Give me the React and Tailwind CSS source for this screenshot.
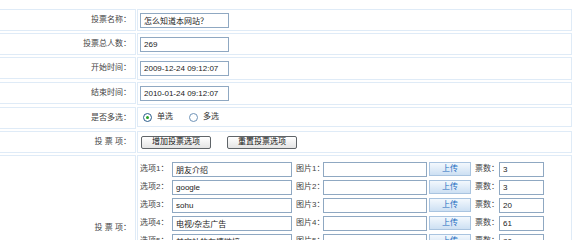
import React from 'react';

// legacy vote edit form

const cell = 'border border-[#dfebf7] bg-white';
const field = 'shrink-0 h-[15px] border border-[#8fa8c2] bg-white px-[3px] text-[8px] text-[#222] outline-none';

const Label = ({ children, tall }) => (
  <div className={`${cell} flex items-center justify-end pr-[4px] text-[#444] whitespace-nowrap ${tall ? '' : 'h-[22px]'}`}>
    {children}
  </div>
);

const Radio = ({ checked }) => (
  <span className={`w-[9px] h-[9px] rounded-full border bg-white flex items-center justify-center ${checked ? 'border-[#2b5d8c]' : 'border-[#6f93b8]'}`}>
    {checked && <span className="w-[3px] h-[3px] rounded-full bg-[#26a326]" />}
  </span>
);

const options = [
  { name: '朋友介绍', votes: '3' },
  { name: 'google', votes: '3' },
  { name: 'sohu', votes: '20' },
  { name: '电视/杂志广告', votes: '61' },
  { name: '其它站的友情链接', votes: '80' },
  { name: '搜索引擎', votes: '42' },
  { name: '其他', votes: '12' },
];

export default function App() {
  return (
    <div className="w-[582px] h-[240px] overflow-hidden bg-white pt-[9px] text-[8px] font-['Liberation_Sans','Noto_Sans_CJK_SC',sans-serif]">
      <div className="ml-[-3px] grid grid-cols-[139px_435px] gap-x-px gap-y-[2px]">
        <Label>投票名称：</Label>
        <div className={`${cell} h-[22px] flex items-center pl-[2px]`}>
          <input readOnly defaultValue="怎么知道本网站？" className={`${field} w-[89px]`} />
        </div>

        <Label>投票总人数：</Label>
        <div className={`${cell} h-[22px] flex items-center pl-[2px]`}>
          <input readOnly defaultValue="269" className={`${field} w-[89px]`} />
        </div>

        <Label>开始时间：</Label>
        <div className={`${cell} h-[23px] flex items-center pl-[2px]`}>
          <input readOnly defaultValue="2009-12-24 09:12:07" className={`${field} w-[89px]`} />
        </div>

        <Label>结束时间：</Label>
        <div className={`${cell} h-[23px] flex items-center pl-[2px]`}>
          <input readOnly defaultValue="2010-01-24 09:12:07" className={`${field} w-[89px]`} />
        </div>

        <Label>是否多选：</Label>
        <div className={`${cell} h-[20px] flex items-center pl-[5px] text-[#333]`}>
          <Radio checked />
          <span className="ml-[5px]">单选</span>
          <span className="ml-[16px]"><Radio /></span>
          <span className="ml-[5px]">多选</span>
        </div>

        <Label>投 票 项：</Label>
        <div className={`${cell} h-[22px] flex items-center pl-[3px] gap-[16px]`}>
          <button className="w-[70px] h-[13px] rounded-[2px] border border-[#5f6468] bg-gradient-to-b from-white to-[#e4e4e4] text-[8px] leading-none text-[#111]">
            增加投票选项
          </button>
          <button className="w-[70px] h-[13px] rounded-[2px] border border-[#5f6468] bg-gradient-to-b from-white to-[#e4e4e4] text-[8px] leading-none text-[#111]">
            重置投票选项
          </button>
        </div>

        <Label tall>投 票 项：</Label>
        <div className={`${cell} flex flex-col pl-[2px] pt-[4px] pb-[14px] text-[#444] whitespace-nowrap`}>
          {options.map((o, i) => (
            <div key={i} className="h-[18px] flex items-center">
              <span className="shrink-0 w-[32px]">选项{i + 1}：</span>
              <input readOnly defaultValue={o.name} className={`${field} w-[120px]`} />
              <span className="shrink-0 ml-[4px] w-[27px]">图片{i + 1}：</span>
              <input readOnly defaultValue="" className={`${field} w-[104px]`} />
              <button className="shrink-0 ml-[2px] w-[42px] h-[14px] border border-[#a9c4e0] bg-gradient-to-b from-[#f3f8fd] to-[#cde0f3] text-[8px] leading-none text-[#1c6cc0]">
                上传
              </button>
              <span className="shrink-0 ml-[4px] w-[24px]">票数：</span>
              <input readOnly defaultValue={o.votes} className={`${field} w-[45px]`} />
            </div>
          ))}
        </div>
      </div>
    </div>
  );
}
